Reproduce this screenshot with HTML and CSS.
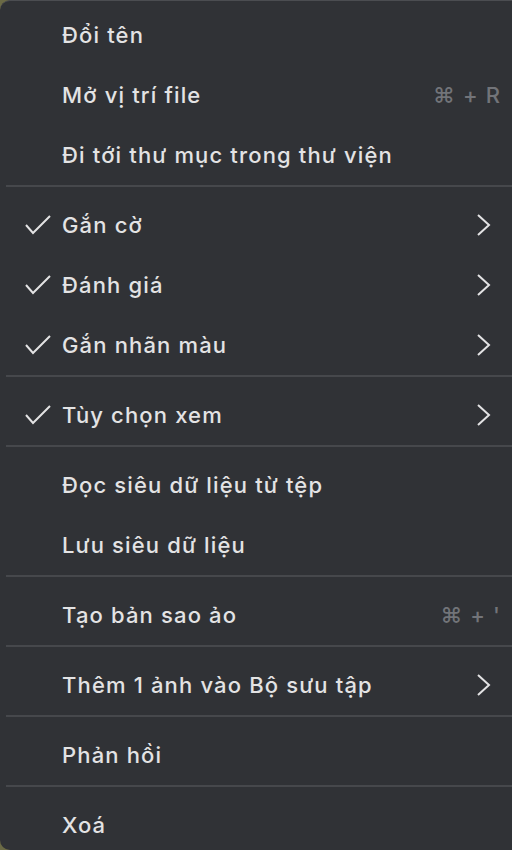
FILE: index.html
```html
<!DOCTYPE html>
<html lang="vi">
<head>
    <meta charset="UTF-8">
    <meta name="viewport" content="width=device-width, initial-scale=1.0">
    <link rel="stylesheet" href="styles.css">
    <title>Menu ngữ cảnh</title>
</head>
<body>

    <div class="menu">
        <div class="item"><span class="check"></span><span class="label">Đổi tên</span></div>
        <div class="item"><span class="check"></span><span class="label">Mở vị trí file</span><span class="shortcut">⌘ + R</span></div>
        <div class="item"><span class="check"></span><span class="label">Đi tới thư mục trong thư viện</span></div>

        <div class="separator"></div>

        <div class="item">
            <span class="check"><svg viewBox="0 0 26 20"><path d="M1 10 L8 18 L25 1"/></svg></span>
            <span class="label">Gắn cờ</span>
            <span class="arrow"><svg viewBox="0 0 14 22"><path d="M1 1 L12 11 L1 21"/></svg></span>
        </div>
        <div class="item">
            <span class="check"><svg viewBox="0 0 26 20"><path d="M1 10 L8 18 L25 1"/></svg></span>
            <span class="label">Đánh giá</span>
            <span class="arrow"><svg viewBox="0 0 14 22"><path d="M1 1 L12 11 L1 21"/></svg></span>
        </div>
        <div class="item">
            <span class="check"><svg viewBox="0 0 26 20"><path d="M1 10 L8 18 L25 1"/></svg></span>
            <span class="label">Gắn nhãn màu</span>
            <span class="arrow"><svg viewBox="0 0 14 22"><path d="M1 1 L12 11 L1 21"/></svg></span>
        </div>

        <div class="separator"></div>

        <div class="item">
            <span class="check"><svg viewBox="0 0 26 20"><path d="M1 10 L8 18 L25 1"/></svg></span>
            <span class="label">Tùy chọn xem</span>
            <span class="arrow"><svg viewBox="0 0 14 22"><path d="M1 1 L12 11 L1 21"/></svg></span>
        </div>

        <div class="separator"></div>

        <div class="item"><span class="check"></span><span class="label">Đọc siêu dữ liệu từ tệp</span></div>
        <div class="item"><span class="check"></span><span class="label">Lưu siêu dữ liệu</span></div>

        <div class="separator"></div>

        <div class="item"><span class="check"></span><span class="label">Tạo bản sao ảo</span><span class="shortcut">⌘ + '</span></div>

        <div class="separator"></div>

        <div class="item">
            <span class="check"></span>
            <span class="label">Thêm 1 ảnh vào Bộ sưu tập</span>
            <span class="arrow"><svg viewBox="0 0 14 22"><path d="M1 1 L12 11 L1 21"/></svg></span>
        </div>

        <div class="separator"></div>

        <div class="item"><span class="check"></span><span class="label">Phản hồi</span></div>

        <div class="separator"></div>

        <div class="item"><span class="check"></span><span class="label">Xoá</span></div>
    </div>

</body>
</html>
```

FILE: styles.css
```css
body {
    margin: 0;
    background-color: #6b6a45;
    font-family: 'Inter', 'Noto Sans', sans-serif;
    overflow: hidden;
}

.menu {
    background-color: #303236;
    border-top: 1px solid #4b4d51;
    border-radius: 10px 0 0 10px;
    padding-top: 4px;
    height: 850px;
    box-sizing: border-box;
}

.item {
    display: flex;
    align-items: center;
    height: 60px;
    color: #e3e3e4;
    font-size: 22px;
    font-weight: 500;
}

.check {
    width: 62px;
    flex-shrink: 0;
    display: flex;
    align-items: center;
    padding-left: 25px;
    box-sizing: border-box;
}

.check svg {
    width: 26px;
    height: 20px;
}

.label {
    flex: 1;
    letter-spacing: 1.15px;
}

.shortcut {
    color: #727479;
    padding-right: 11px;
    letter-spacing: 1.1px;
}

.arrow {
    display: flex;
    padding-right: 21px;
}

.arrow svg {
    width: 14px;
    height: 22px;
}

svg path {
    fill: none;
    stroke: #e3e3e4;
    stroke-width: 2;
}

.separator {
    height: 2px;
    margin: 0 0 8px 6px;
    background-color: #46484c;
}
```
